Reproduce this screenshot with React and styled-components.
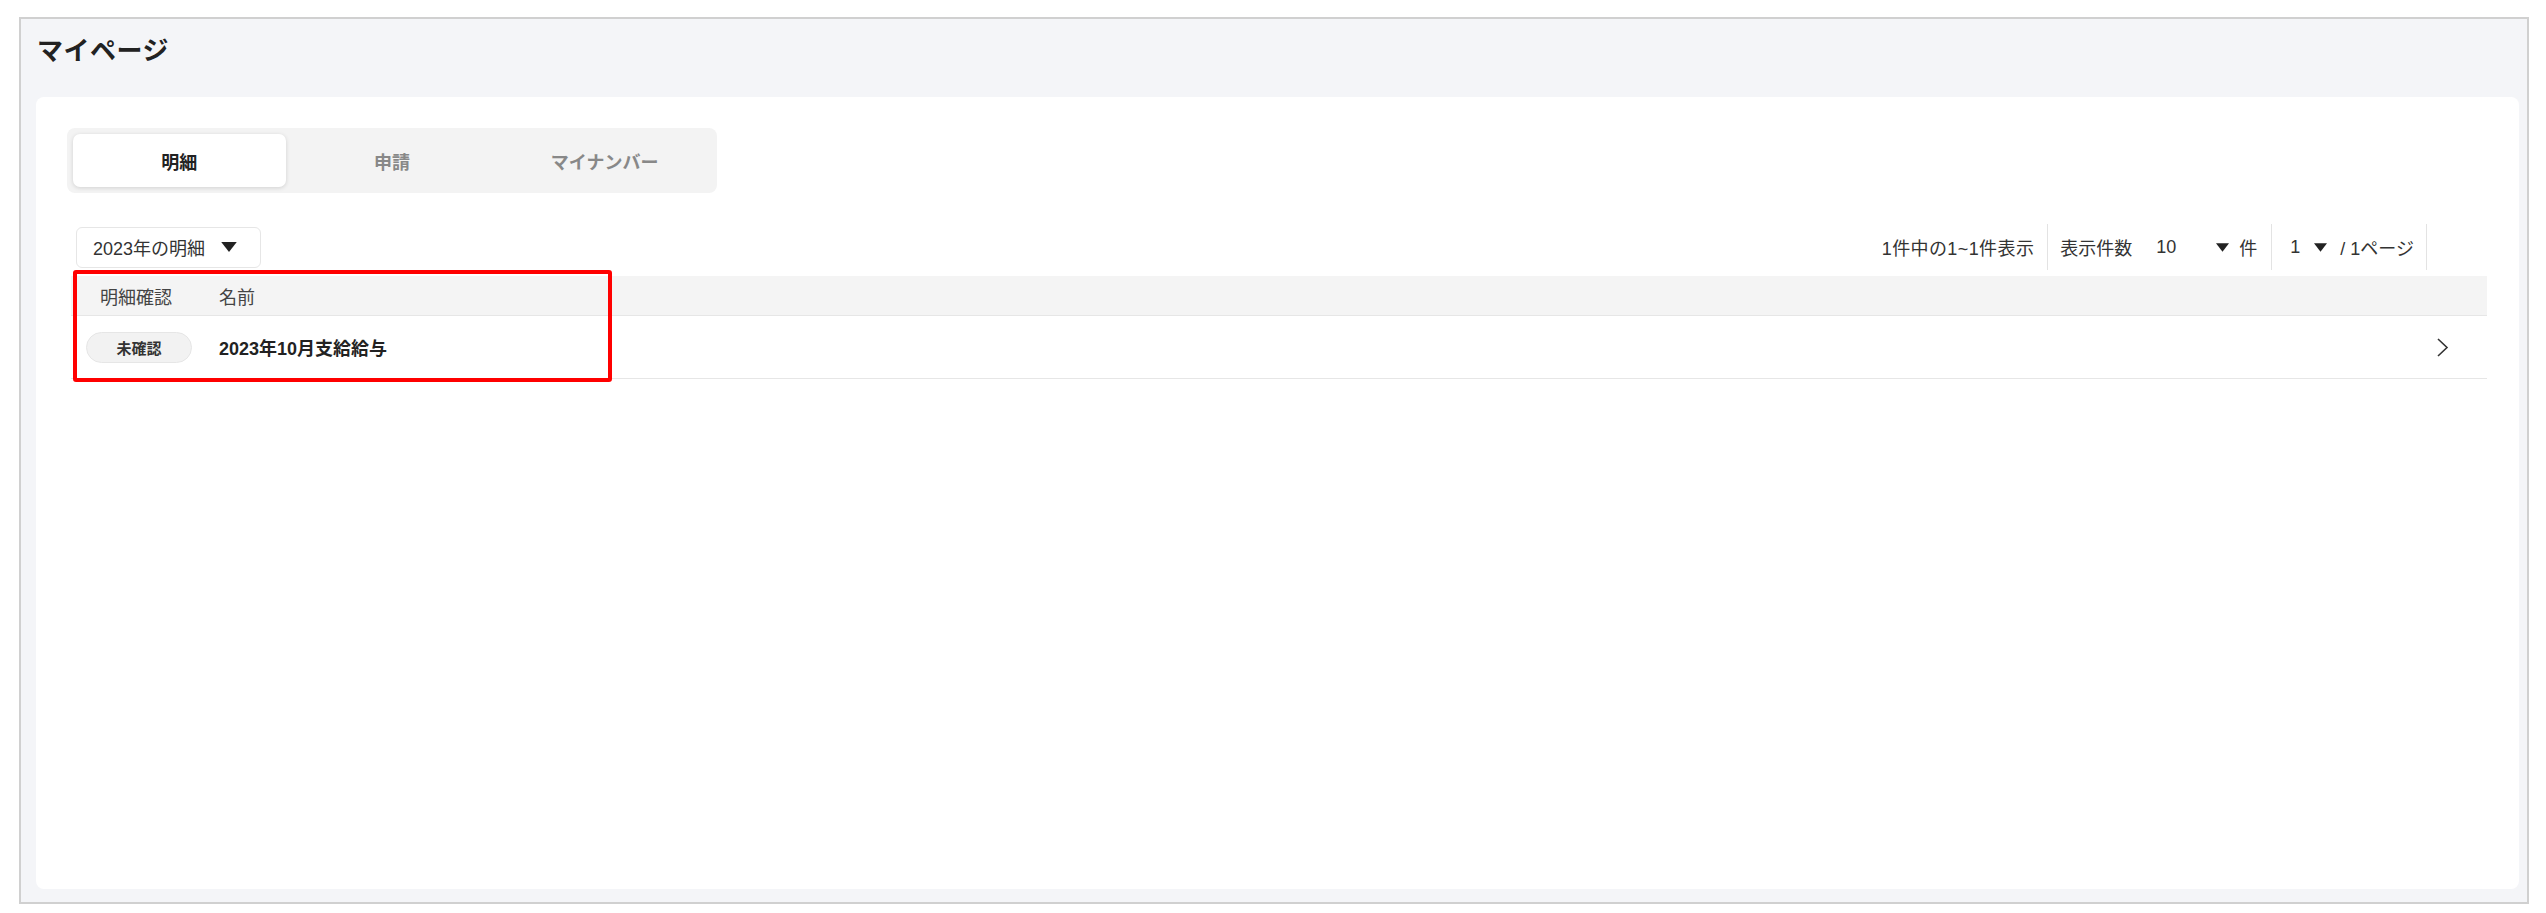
import React, { useState } from 'react'
import styled, { createGlobalStyle } from 'styled-components'

const GlobalStyle = createGlobalStyle`
  body {
    margin: 0;
    background-color: #fff;
    font-family: "Liberation Sans", "Noto Sans CJK JP", sans-serif;
    color: #333;
  }
`;

const Page = styled.div`
  padding: 17px 0 0 19px;
`;

const Frame = styled.div`
  width: 2510px;
  height: 887px;
  box-sizing: border-box;
  border: 2px solid #d0d0d0;
  background-color: #f4f5f8;
  display: flex;
  flex-direction: column;
`;

const Header = styled.div`
  height: 78px;
  box-sizing: border-box;
  padding: 19px 0 0 16px;
`;

const Title = styled.h1`
  margin: 0;
  font-size: 26px;
  line-height: 26px;
  font-weight: 700;
  color: #222;
  letter-spacing: .5px;
`;

const Card = styled.div`
  flex: 1;
  margin: 0 8px 13px 15px;
  padding: 31px 32px 0 31px;
  background-color: #fff;
  border-radius: 8px;
`;

const Tabs = styled.div`
  width: 650px;
  height: 65px;
  box-sizing: border-box;
  padding: 6px;
  display: flex;
  background-color: #f3f3f3;
  border-radius: 8px;
`;

const Tab = styled.button`
  flex: 1;
  border: none;
  border-radius: 7px;
  cursor: pointer;
  font-family: inherit;
  font-size: 18px;
  font-weight: 700;
  background-color: ${(props) => (props.active ? '#fff' : 'transparent')};
  color: ${(props) => (props.active ? '#222' : '#888')};
  box-shadow: ${(props) => (props.active ? '0 1px 4px rgba(0, 0, 0, 0.14)' : 'none')};
`;

const Toolbar = styled.div`
  margin-top: 31px;
  height: 46px;
  display: flex;
  align-items: center;
  justify-content: space-between;
  padding: 0 60px 0 9px;
`;

const YearSelect = styled.div`
  height: 41px;
  box-sizing: border-box;
  padding: 0 23px 0 16px;
  display: flex;
  align-items: center;
  gap: 16px;
  border: 1px solid #e6e6e6;
  border-radius: 6px;
  font-size: 18px;
  color: #333;
`;

const Pager = styled.div`
  height: 46px;
  display: flex;
  align-items: stretch;
  font-size: 18px;
  color: #333;
`;

const PagerItem = styled.div`
  display: flex;
  align-items: center;
  padding: ${(props) => props.pad || '0 12px'};
  border-right: 1px solid #e3e3e3;
  letter-spacing: ${(props) => props.ls || '0'};
`;

const Plain = styled.span`
  margin: ${(props) => props.m || '0'};
`;

const Table = styled.div`
  position: relative;
  margin: 6px 0 0 4px;
`;

const HeadRow = styled.div`
  height: 39px;
  display: grid;
  grid-template-columns: 148px 1fr;
  align-items: center;
  background-color: #f4f4f4;
  border-bottom: 1px solid #e6e6e6;
  font-size: 18px;
  color: #444;
`;

const HeadCell = styled.div`
  padding-left: ${(props) => props.pl || '0'};
`;

const Row = styled.div`
  height: 62px;
  display: grid;
  grid-template-columns: 148px 1fr 60px;
  align-items: center;
  border-bottom: 1px solid #e6e6e6;
`;

const Badge = styled.span`
  margin-left: 15px;
  width: 106px;
  height: 31px;
  box-sizing: border-box;
  display: inline-flex;
  align-items: center;
  justify-content: center;
  background-color: #f2f2f2;
  border: 1px solid #e6e6e6;
  border-radius: 16px;
  font-size: 15px;
  font-weight: 700;
  color: #333;
`;

const Name = styled.div`
  font-size: 18px;
  font-weight: 700;
  color: #222;
`;

const Arrow = styled.div`
  display: flex;
  justify-content: flex-end;
  padding-right: 38px;
`;

const Highlight = styled.div`
  position: absolute;
  left: 2px;
  top: -6px;
  width: 539px;
  height: 112px;
  box-sizing: border-box;
  border: 4px solid #ff0000;
  border-radius: 3px;
  pointer-events: none;
`;

const Caret = ({ w = 14, h = 9 }) => (
  <svg width={w} height={h} viewBox="0 0 14 9">
    <path d="M0 0 H14 L7 9 Z" fill="#222" />
  </svg>
);

const Chevron = () => (
  <svg width="13" height="21" viewBox="0 0 13 21">
    <polyline points="2,2 11,10.5 2,19" fill="none" stroke="#333" strokeWidth="1.6" />
  </svg>
);

const tabs = ['明細', '申請', 'マイナンバー'];

const App = () => {
  const [tab, setTab] = useState(0);

  return (
    <Page>
      <GlobalStyle />
      <Frame>
        <Header>
          <Title>マイページ</Title>
        </Header>
        <Card>
          <Tabs>
            {tabs.map((t, i) => (
              <Tab key={t} active={i === tab} onClick={() => setTab(i)}>{t}</Tab>
            ))}
          </Tabs>

          <Toolbar>
            <YearSelect>
              2023年の明細
              <Caret w={16} h={10} />
            </YearSelect>
            <Pager>
              <PagerItem pad="0 13px 0 0" ls=".4px">1件中の1~1件表示</PagerItem>
              <PagerItem pad="0 14px 0 12px">
                <Plain m="0 24px 0 0">表示件数</Plain>
                <Plain m="0 40px 0 0">10</Plain>
                <Caret w={13} h={9} />
                <Plain m="0 0 0 10px">件</Plain>
              </PagerItem>
              <PagerItem pad="0 12px 0 18px">
                <Plain m="0 14px 0 0">1</Plain>
                <Caret w={13} h={9} />
                <Plain m="0 0 0 13px">/ 1ページ</Plain>
              </PagerItem>
            </Pager>
          </Toolbar>

          <Table>
            <HeadRow>
              <HeadCell pl="29px">明細確認</HeadCell>
              <HeadCell>名前</HeadCell>
            </HeadRow>
            <Row>
              <div><Badge>未確認</Badge></div>
              <Name>2023年10月支給給与</Name>
              <Arrow><Chevron /></Arrow>
            </Row>
            <Highlight />
          </Table>
        </Card>
      </Frame>
    </Page>
  );
};

export default App
